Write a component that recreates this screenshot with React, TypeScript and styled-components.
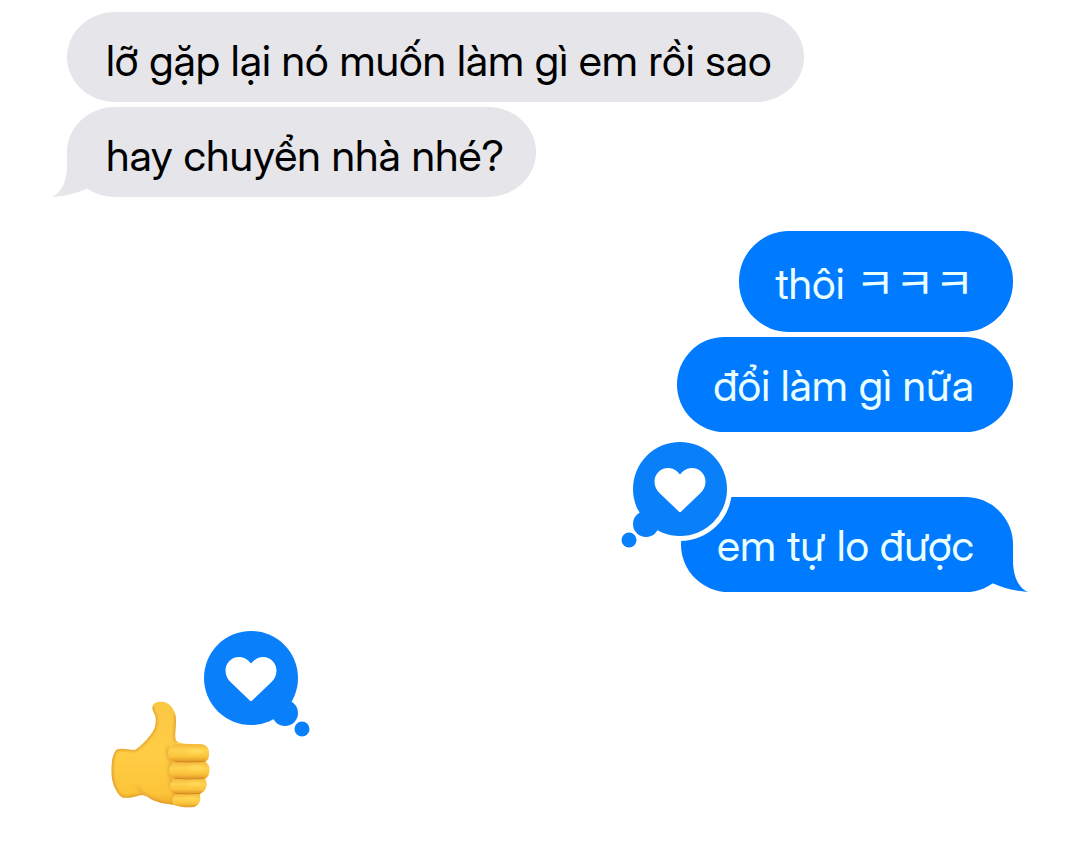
import React from "react";
import styled, { createGlobalStyle, css } from "styled-components";

const GlobalStyle = createGlobalStyle`
  * {
    box-sizing: border-box;
  }

  body {
    margin: 0;
    background: #ffffff;
    font-family: "Inter Display", Inter, "Noto Sans CJK KR", sans-serif;
  }
`;

type Side = "received" | "sent";

const Conversation = styled.main`
  display: flex;
  flex-direction: column;
  gap: 34px;
  padding: 12px 67px 44px;
`;

const MessageGroup = styled.ul<{ $side: Side }>`
  display: flex;
  flex-direction: column;
  align-items: ${({ $side }) => ($side === "sent" ? "flex-end" : "flex-start")};
  gap: 5px;
  margin: 0;
  padding: 0;
  list-style: none;
`;

const Message = styled.li<{ $reacted?: boolean }>`
  position: relative;
  max-width: 100%;
  margin-top: ${({ $reacted }) => ($reacted ? "60px" : "0")};
`;

const Bubble = styled.p<{ $side: Side; $tall?: boolean }>`
  margin: 0;
  font-size: 43px;
  line-height: 50px;

  ${({ $side, $tall }) =>
    $side === "sent"
      ? css`
          padding: ${$tall ? "27px 39px 24px 36px" : "23px 39px 22px 36px"};
          border-radius: 50px;
          background: #007aff;
          color: #eaffff;
        `
      : css`
          padding: 23px 32px 17px 39px;
          border-radius: 48px / 45px;
          background: #e5e5ea;
          color: #000000;
        `}
`;

const TailShape = styled.svg<{ $side: Side }>`
  position: absolute;
  bottom: 0;
  width: 40px;
  height: 46px;
  ${({ $side }) =>
    $side === "sent"
      ? css`
          right: -15px;
          fill: #007aff;
          transform: scaleX(-1);
        `
      : css`
          left: -15px;
          fill: #e5e5ea;
        `}
`;

function Tail({ side }: { side: Side }) {
  return (
    <TailShape $side={side} viewBox="0 0 40 46" aria-hidden="true">
      <path d="M15 0V14C15 28 11 41 0 46C14 45 25 42 36 37L40 28V0Z" />
    </TailShape>
  );
}

const ReactionShape = styled.svg<{ $side: Side }>`
  position: absolute;
  width: 116px;
  height: 116px;
  ${({ $side }) =>
    $side === "sent"
      ? css`
          top: -61px;
          left: -65px;
        `
      : css`
          top: -75px;
          left: 89px;
        `}
`;

function HeartReaction({ side }: { side: Side }) {
  return (
    <ReactionShape $side={side} viewBox="0 0 116 116" role="img" aria-label="Loved">
      <g transform={side === "received" ? "translate(116 0) scale(-1 1)" : undefined}>
        <circle cx="64" cy="53" r="52" fill="#ffffff" />
        <g fill="#0a7ffa">
          <circle cx="64" cy="53" r="47" />
          <circle cx="30" cy="88" r="13" />
          <circle cx="13" cy="104" r="7.5" />
        </g>
        <path
          fill="#ffffff"
          d="M64 38.500C60.500 34 56 32 52 32C44.500 32 38.500 38 38.500 45.500C38.500 50.500 40.500 54 43.500 57L63 75.700Q64 76.500 65 75.700L84.500 57C87.500 54 89.500 50.500 89.500 45.500C89.500 38 83.500 32 76 32C72 32 67.500 34 64 38.500Z"
        />
      </g>
    </ReactionShape>
  );
}

const EmojiMessage = styled.div`
  position: relative;
  align-self: flex-start;
  margin: 74px 0 0 43px;
`;

const ThumbShape = styled.svg`
  display: block;
  width: 102px;
  height: 110px;
`;

function ThumbsUp() {
  return (
    <ThumbShape viewBox="45 30 306 330" role="img" aria-label="Thumbs up">
      <defs>
        <linearGradient id="skin" x1="0" y1="0" x2="0" y2="1">
          <stop offset="0" stopColor="#fbc744" />
          <stop offset="0.5" stopColor="#ffcd45" />
          <stop offset="0.85" stopColor="#fcc438" />
          <stop offset="1" stopColor="#e9a52b" />
        </linearGradient>
        <linearGradient id="finger" x1="0" y1="0" x2="0" y2="1">
          <stop offset="0" stopColor="#f3b83c" />
          <stop offset="0.35" stopColor="#ffd24d" />
          <stop offset="0.7" stopColor="#fbc33b" />
          <stop offset="1" stopColor="#dd9527" />
        </linearGradient>
        <linearGradient id="wrist" x1="0" y1="0" x2="1" y2="0">
          <stop offset="0" stopColor="#e3a12e" stopOpacity="0.8" />
          <stop offset="0.12" stopColor="#f9c33c" stopOpacity="0" />
        </linearGradient>
        <filter id="soften" x="-20%" y="-20%" width="140%" height="140%">
          <feGaussianBlur stdDeviation="4" />
        </filter>
        <clipPath id="hand">
          <path d="M172 52C174 36 190 33 208 36C229 42 243 65 243 88C244 111 238 132 242 150C250 160 265 161 285 162L318 163C336 164 344 178 342 195C341 207 338 212 332 216C343 223 346 236 342 250C340 259 336 263 331 266C337 278 336 294 326 304C321 309 317 310 314 312C320 329 311 349 294 351C277 354 256 350 235 344C206 341 180 335 162 323C149 315 141 313 131 317C116 321 100 325 85 323C69 318 53 289 50 258C47 224 53 188 66 178C83 173 102 179 119 180C136 170 151 154 164 138C181 119 185 97 181 79C178 67 171 62 172 52Z" />
        </clipPath>
      </defs>
      <g clipPath="url(#hand)">
        <path fill="url(#skin)" d="M45 28H351V358H45Z" />
        <path fill="url(#wrist)" d="M45 160H180V330H45Z" />
        <g fill="none" filter="url(#soften)">
          <path stroke="#d8922b" strokeWidth="6" d="M172 50C169 63 180 70 182 82C186 101 180 122 162 142C149 157 134 173 119 181C101 180 82 174 66 178C53 188 47 226 51 260C54 289 69 318 86 324C105 325 121 319 134 315" />
          <path stroke="#d8922b" strokeWidth="7" d="M242 68C248 98 236 134 243 154M136 314C160 317 164 339 240 345" />
          <path stroke="#e5a534" strokeWidth="8" d="M222 170C214 190 218 205 231 216C218 232 222 256 230 266C222 283 229 303 241 312C229 326 233 340 245 348" />
          <path stroke="#edb13a" strokeWidth="8" d="M126 288C132 302 143 311 159 318" />
        </g>
        <rect x="219" y="162" width="125" height="54" rx="26" fill="url(#finger)" />
        <rect x="222" y="216" width="123" height="51" rx="25" fill="url(#finger)" />
        <rect x="224" y="266" width="112" height="46" rx="23" fill="url(#finger)" />
        <rect x="232" y="311" width="85" height="42" rx="20" fill="url(#finger)" />
        <g fill="none" stroke="#c98220" strokeWidth="3" opacity="0.7">
          <path d="M239 215Q282 218 332 214M238 265Q280 269 329 265M242 310Q278 314 316 310" />
        </g>
        <g fill="#ffda5a" filter="url(#soften)">
          <ellipse cx="302" cy="184" rx="27" ry="8" />
          <ellipse cx="304" cy="234" rx="25" ry="7" />
          <ellipse cx="298" cy="281" rx="22" ry="6" />
          <ellipse cx="285" cy="326" rx="18" ry="5" />
        </g>
      </g>
    </ThumbShape>
  );
}

export default function App() {
  return (
    <>
      <GlobalStyle />
      <Conversation lang="vi">
        <MessageGroup $side="received">
          <Message>
            <Bubble $side="received">lỡ gặp lại nó muốn làm gì em rồi sao</Bubble>
          </Message>
          <Message>
            <Bubble $side="received">hay chuyển nhà nhé?</Bubble>
            <Tail side="received" />
          </Message>
        </MessageGroup>

        <MessageGroup $side="sent">
          <Message>
            <Bubble $side="sent" $tall>
              thôi ㅋㅋㅋ
            </Bubble>
          </Message>
          <Message>
            <Bubble $side="sent">đổi làm gì nữa</Bubble>
          </Message>
          <Message $reacted>
            <Bubble $side="sent">em tự lo được</Bubble>
            <Tail side="sent" />
            <HeartReaction side="sent" />
          </Message>
        </MessageGroup>

        <EmojiMessage>
          <ThumbsUp />
          <HeartReaction side="received" />
        </EmojiMessage>
      </Conversation>
    </>
  );
}
